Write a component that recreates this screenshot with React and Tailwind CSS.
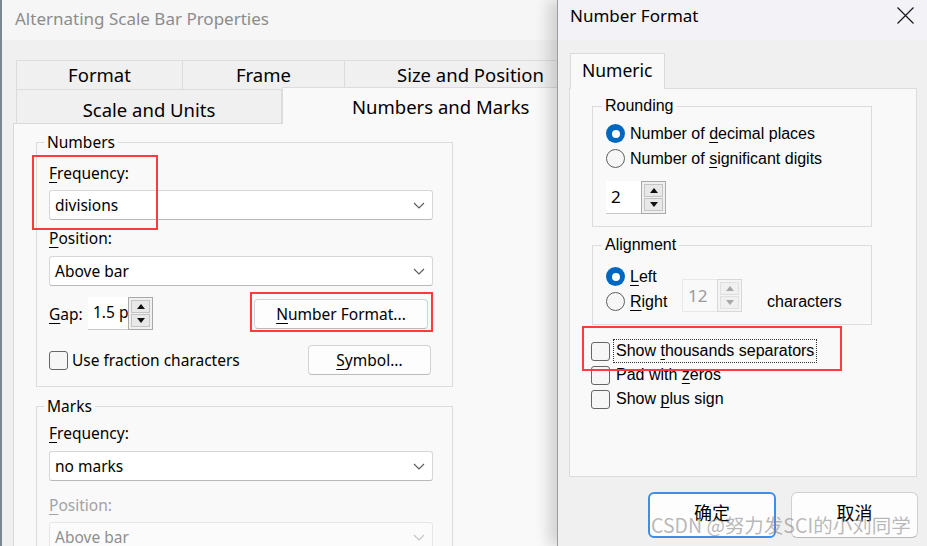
import React from 'react';

const Chevron = ({ disabled }) => (
  <svg width="12" height="7" viewBox="0 0 12 7">
    <polyline points="1,1 6,6 11,1" fill="none" stroke={disabled ? '#c4c4c4' : '#5a5a5a'} strokeWidth="1.1" />
  </svg>
);

const Tri = ({ up, disabled }) => (
  <svg width="8" height="5" viewBox="0 0 8 5">
    <polygon points={up ? '0,5 8,5 4,0' : '0,0 8,0 4,5'} fill={disabled ? '#a8a8a8' : '#111'} />
  </svg>
);

const Select = ({ value, disabled }) => (
  <div
    className={
      'flex h-[30px] w-full items-center justify-between rounded-[3px] border pl-[5px] pr-[7px] ' +
      (disabled
        ? 'border-[#e6e6e6] bg-[#fbfbfb] text-[#8f8f8f]'
        : 'border-[#d6d6d6] border-b-[#b9b9b9] bg-white text-black')
    }
  >
    <span className="leading-[20px]">{value}</span>
    <Chevron disabled={disabled} />
  </div>
);

const Spin = ({ value, w, disabled, font }) => (
  <div className={'flex h-[33px] ' + w}>
    <div
      className={
        'flex flex-1 items-center overflow-hidden whitespace-nowrap pl-[5px] ' +
        (disabled ? 'border border-r-0 border-[#e8e8e8] bg-[#f9f9f9] text-[#9b9b9b]' : 'border-b border-[#c9c9c9] bg-white text-black') +
        ' ' + font
      }
    >
      {value}
    </div>
    <div
      className={
        'flex w-[25px] flex-col gap-[1px] border p-[2px] ' +
        (disabled ? 'border-[#d8d8d8] bg-[#f4f4f4]' : 'border-[#a9a9a9] bg-[#f0f0f0]')
      }
    >
      <div className={'flex flex-1 items-center justify-center border ' + (disabled ? 'border-[#e0e0e0] bg-[#f0f0f0]' : 'border-[#c4c4c4] bg-[#e8e8e8]')}>
        <Tri up disabled={disabled} />
      </div>
      <div className={'flex flex-1 items-center justify-center border ' + (disabled ? 'border-[#e0e0e0] bg-[#f0f0f0]' : 'border-[#c4c4c4] bg-[#e8e8e8]')}>
        <Tri disabled={disabled} />
      </div>
    </div>
  </div>
);

const Radio = ({ checked }) =>
  checked ? (
    <span className="flex h-[19px] w-[19px] shrink-0 items-center justify-center rounded-full bg-[#0067c0]">
      <span className="h-[8px] w-[8px] rounded-full bg-white" />
    </span>
  ) : (
    <span className="h-[19px] w-[19px] shrink-0 rounded-full border border-[#5f5f5f] bg-[#f6f6f6]" />
  );

const Check = () => <span className="h-[19px] w-[19px] shrink-0 rounded-[3px] border border-[#666] bg-[#f6f6f6]" />;

const U = ({ children }) => <span className="underline decoration-1 underline-offset-[3px]">{children}</span>;

const Btn = ({ children, cls }) => (
  <div className={'flex h-[30px] items-center justify-center rounded-[4px] border border-[#d3d3d3] border-b-[#bcbcbc] bg-[#fdfdfd] leading-[20px] ' + cls}>
    {children}
  </div>
);

const Red = ({ cls }) => <div className={'pointer-events-none absolute border-2 border-[#ff3b3b] ' + cls} />;

const L = "font-['Noto_Sans',sans-serif]";
const R = "font-['Liberation_Sans',Arial,sans-serif]";

function ScaleBarDialog() {
  return (
    <div className="h-full w-[557px] shrink-0 overflow-hidden border-l-2 border-[#7b8792]">
      <div className={'flex h-full w-[660px] flex-col rounded-tl-[8px] bg-[#f0f0f0] ' + L}>
        <div className="h-[40px] shrink-0 bg-[#f6f6f6] pl-[13px] pt-[7px] text-[17px] leading-[24px] text-[#8c8c8c]">
          Alternating Scale Bar Properties
        </div>

        {/* tab rows */}
        <div className="mt-[20px] ml-[14px] flex h-[30px] shrink-0 text-[18.5px] leading-[24px] text-black">
          <div className="flex w-[167px] items-center justify-center border border-[#dcdcdc]">Format</div>
          <div className="-ml-px flex w-[163px] items-center justify-center border border-[#dcdcdc]">Frame</div>
          <div className="-ml-px flex w-[300px] items-center border border-[#dcdcdc] pl-[52px]">Size and Position</div>
        </div>
        <div className="ml-[14px] -mt-px flex h-[35px] shrink-0 items-start text-[18.5px] leading-[24px] text-black">
          <div className="flex h-[35px] w-[266px] items-center justify-center border border-[#dcdcdc] pt-[6px]">Scale and Units</div>
          <div className="relative z-10 -mt-[2px] flex h-[37px] w-[330px] items-center border-x border-t border-[#dcdcdc] bg-[#f9f9f9] pl-[69px] pt-[2px]">
            Numbers and Marks
          </div>
        </div>

        <div className="-mt-px ml-[11px] flex-1 shrink-0 border border-[#d9d9d9] bg-[#f9f9f9] text-[15.5px] text-black">
          <fieldset className="mt-[8px] ml-[22px] w-[417px] border border-[#dcdcdc] pl-[12px] pr-[19px] pb-[11px]">
            <legend className="-ml-[5px] px-[3px] leading-[20px]">Numbers</legend>
            <div className="mt-[11px] leading-[20px]">
              <U>F</U>requency:
            </div>
            <div className="mt-[7px]">
              <Select value="divisions" />
            </div>
            <div className="mt-[8px] leading-[20px]">
              <U>P</U>osition:
            </div>
            <div className="mt-[8px]">
              <Select value="Above bar" />
            </div>
            <div className="mt-[11px] flex items-center">
              <span className="w-[39px] leading-[20px]">
                <U>G</U>ap:
              </span>
              <Spin value="1.5 p" w="w-[65px]" font={L} />
              <Btn cls="ml-auto mr-[5px] w-[174px]">
                <span>
                  <U>N</U>umber Format...
                </span>
              </Btn>
            </div>
            <div className="mt-[15px] flex items-center">
              <Check />
              <span className="ml-[4px] leading-[20px]">Use fraction characters</span>
              <Btn cls="ml-auto mr-[2px] w-[123px]">
                <span>
                  <U>S</U>ymbol...
                </span>
              </Btn>
            </div>
          </fieldset>

          <fieldset className="mt-[9px] ml-[22px] w-[417px] border border-[#dcdcdc] pl-[12px] pr-[19px] pb-[11px]">
            <legend className="-ml-[5px] px-[3px] leading-[20px]">Marks</legend>
            <div className="mt-[7px] leading-[20px]">
              <U>F</U>requency:
            </div>
            <div className="mt-[8px]">
              <Select value="no marks" />
            </div>
            <div className="mt-[14px] leading-[20px] text-[#a3a3a3]">
              <U>P</U>osition:
            </div>
            <div className="mt-[7px]">
              <Select value="Above bar" disabled />
            </div>
          </fieldset>
        </div>
      </div>
    </div>
  );
}

function NumberFormatDialog() {
  return (
    <div className="relative z-10 flex h-full w-[370px] shrink-0 flex-col border-l border-[#9c9c9c] bg-[#f0f0f0] shadow-[-8px_0_14px_rgba(0,0,0,0.16)]">
      <div className={'flex h-[40px] shrink-0 items-start justify-between bg-[#f3f2f7] pl-[12px] pr-[12px] ' + L}>
        <span className="pt-[5px] text-[17px] leading-[22px] text-black">Number Format</span>
        <svg className="mt-[6px]" width="19" height="19" viewBox="0 0 19 19">
          <path d="M1.5 1.5 L17.5 17.5 M17.5 1.5 L1.5 17.5" stroke="#1a1a1a" strokeWidth="1.2" />
        </svg>
      </div>

      <div className={'relative z-10 mt-[13px] ml-[12px] flex h-[36px] w-[95px] shrink-0 items-center border-x border-t border-[#dadada] bg-[#f9f9f9] pb-[3px] pl-[11px] text-[17.5px] leading-[24px] text-black ' + L}>
        Numeric
      </div>
      <div className={'-mt-px ml-[11px] h-[389px] w-[348px] shrink-0 border border-[#dcdcdc] bg-[#f9f9f9] text-[16px] text-black ' + R}>
        <fieldset className="mt-[7px] ml-[22px] w-[280px] border border-[#dcdcdc] px-[12px] pb-[12px]">
          <legend className="-ml-[3px] px-[3px] leading-[20px]">Rounding</legend>
          <div className="mt-[5px] flex h-[25px] items-center pl-px">
            <Radio checked />
            <span className="ml-[5px] leading-[20px]">
              Number of <U>d</U>ecimal places
            </span>
          </div>
          <div className="flex h-[25px] items-center pl-px">
            <Radio />
            <span className="ml-[5px] leading-[20px]">
              Number of <U>s</U>ignificant digits
            </span>
          </div>
          <div className="mt-[10px] pl-px">
            <Spin value="2" w="w-[60px]" font={L + ' text-[17px]'} />
          </div>
        </fieldset>

        <fieldset className="mt-[8px] ml-[22px] w-[280px] border border-[#dcdcdc] px-[12px] pb-[10px]">
          <legend className="-ml-[3px] px-[3px] leading-[20px]">Alignment</legend>
          <div className="mt-[9px] flex items-end">
            <div className="w-[77px] pl-px">
              <div className="flex h-[25px] items-center">
                <Radio checked />
                <span className="ml-[5px] leading-[20px]">
                  <U>L</U>eft
                </span>
              </div>
              <div className="flex h-[25px] items-center">
                <Radio />
                <span className="ml-[5px] leading-[20px]">
                  <U>R</U>ight
                </span>
              </div>
            </div>
            <div className="mb-[2px]">
              <Spin value="12" w="w-[60px]" font={L + ' text-[17px]'} disabled />
            </div>
            <span className="ml-[25px] h-[25px] leading-[25px]">characters</span>
          </div>
        </fieldset>

        <div className="mt-[14px] ml-[21px]">
          <div className="flex h-[24px] items-center">
            <Check />
            <span className="ml-[4px] px-[2px] leading-[22px] outline-1 outline-dotted outline-[#333]">
              Show <U>t</U>housands separators
            </span>
          </div>
          <div className="flex h-[24px] items-center">
            <Check />
            <span className="ml-[6px] leading-[20px]">
              Pad with <U>z</U>eros
            </span>
          </div>
          <div className="flex h-[24px] items-center">
            <Check />
            <span className="ml-[6px] leading-[20px]">
              Show <U>p</U>lus sign
            </span>
          </div>
        </div>
      </div>

      <div className="mt-[15px] flex shrink-0 justify-end gap-[15px] pr-[9px] font-['Noto_Sans_CJK_SC',sans-serif] text-[18px] text-black">
        <div className="flex h-[46px] w-[128px] items-center justify-center rounded-[6px] border-2 border-[#3d8ee6] bg-[#fdfdfd] pb-[6px]">确定</div>
        <div className="flex h-[46px] w-[127px] items-center justify-center rounded-[6px] border border-[#d0d0d0] border-b-[#b8b8b8] bg-[#fdfdfd] pb-[6px]">取消</div>
      </div>
    </div>
  );
}

export default function App() {
  return (
    <div className="relative flex h-[546px] w-[927px] overflow-hidden bg-[#f0f0f0]">
      <ScaleBarDialog />
      <NumberFormatDialog />

      <Red cls="left-[32px] top-[155px] h-[75px] w-[126px]" />
      <Red cls="left-[250px] top-[292px] h-[40px] w-[183px]" />
      <Red cls="z-20 left-[582px] top-[326px] h-[45px] w-[260px]" />

      <div className="pointer-events-none absolute left-[651px] top-[511px] z-30 font-['Noto_Sans_CJK_SC',sans-serif] text-[19.5px] leading-[28px] text-[#8a8a8a]/60">
        CSDN @努力发SCI的小刘同学
      </div>
    </div>
  );
}
